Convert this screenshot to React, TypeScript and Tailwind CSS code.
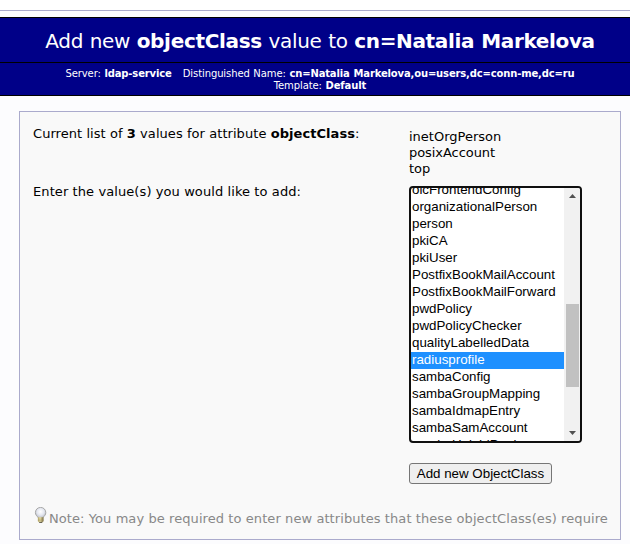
const options = [
  'olcFrontendConfig',
  'organizationalPerson',
  'person',
  'pkiCA',
  'pkiUser',
  'PostfixBookMailAccount',
  'PostfixBookMailForward',
  'pwdPolicy',
  'pwdPolicyChecker',
  'qualityLabelledData',
  'radiusprofile',
  'sambaConfig',
  'sambaGroupMapping',
  'sambaIdmapEntry',
  'sambaSamAccount',
  'sambaUnixIdPool',
];

function Bulb() {
  return (
    <svg width="16" height="16" viewBox="0 0 16 16" className="mt-px block shrink-0">
      <defs>
        <radialGradient id="glass" cx="0.5" cy="0.4" r="0.6">
          <stop offset="0" stopColor="#ffffff" />
          <stop offset="0.55" stopColor="#e4e7f0" />
          <stop offset="1" stopColor="#b9bcc2" />
        </radialGradient>
        <linearGradient id="cap" x1="0" x2="1">
          <stop offset="0" stopColor="#b5a66a" />
          <stop offset="0.4" stopColor="#efe7b0" />
          <stop offset="1" stopColor="#75683c" />
        </linearGradient>
      </defs>
      <path
        d="M7.600 0.400C4.500 0.400 2.400 2.800 2.400 5.600c0 2.200 1.300 3.200 2.200 4.200.4.500.6.900.6 1.300h4.800c0-.4.200-.8.600-1.300.9-1 2.200-2 2.200-4.200C12.800 2.800 10.700 0.400 7.600 0.400z"
        fill="url(#glass)"
        stroke="#a0a0a0"
        strokeWidth="0.9"
      />
      <path d="M4.900 10.300h5.600v3.900l-1.300 1.300H6.200l-1.300-1.300z" fill="url(#cap)" />
      <path d="M4.900 12.200h5.600M4.900 13.700h5.600" stroke="#8f824f" strokeWidth="0.4" />
      <path d="M6.200 15.400h3" stroke="#4a4638" strokeWidth="0.9" />
    </svg>
  );
}

export default function App() {
  return (
    <div className="h-[544px] w-[630px] overflow-hidden bg-[#fcfcfe] font-['DejaVu_Sans',sans-serif] text-[13px] leading-4 text-black">
      <div className="h-[11px] border-b border-[#aaaacc] bg-white" />
      <header className="mt-1.5 whitespace-nowrap border-y border-black bg-[#000088] text-center text-white">
        <h1 className="h-[45px] border-b border-black pl-[10px] pt-[11px] text-[20px] leading-6 tracking-[-0.32px] [word-spacing:0.6px]">
          Add new <b>objectClass</b> value to <b className="tracking-[-0.36px]">cn=Natalia Markelova</b>
        </h1>
        <div className="h-8 pl-[10px] pt-[5px] text-[10px] leading-3 tracking-[-0.1px] [word-spacing:0.6px]">
          <div>
            Server: <b className="tracking-[-0.14px]">ldap-service</b> &nbsp; Distinguished Name:{' '}
            <b className="tracking-[-0.15px]">cn=Natalia Markelova,ou=users,dc=conn-me,dc=ru</b>
          </div>
          <div>
            Template: <b>Default</b>
          </div>
        </div>
      </header>
      <main className="ml-[19px] mt-[15px] h-[429px] w-[602px] border border-[#aaaacc] bg-[#f9f9f9]">
        <div className="flex h-[74px] pl-[13px] pt-[14px]">
          <div className="w-[376px] shrink-0 tracking-[0.06px]">
            Current list of <b>3</b> values for attribute <b>objectClass</b>:
          </div>
          <div className="pt-[3px]">
            <div>inetOrgPerson</div>
            <div className="tracking-[-0.06px]">posixAccount</div>
            <div>top</div>
          </div>
        </div>
        <div className="flex h-[320px] pl-[13px]">
          <div className="-mt-0.5 w-[376px] shrink-0 tracking-[0.09px]">
            Enter the value(s) you would like to add:
          </div>
          <div className="font-['Liberation_Sans',Arial,sans-serif] text-[13.333px]">
            <div className="flex h-[257px] w-[173px] overflow-hidden rounded-[4px] border-2 border-[#101010] bg-white">
              <div className="h-full min-w-0 flex-1 overflow-hidden">
                <div className="-mt-1.5">
                  {options.map((name) => (
                    <div
                      key={name}
                      className={
                        name === 'radiusprofile'
                          ? 'h-[17px] whitespace-nowrap bg-[#1e90ff] pl-px leading-[15px] text-white'
                          : 'h-[17px] whitespace-nowrap pl-px leading-[15px]'
                      }
                    >
                      {name}
                    </div>
                  ))}
                </div>
              </div>
              <div className="flex w-4 flex-col items-center bg-[#f1f1f1] pl-px">
                <svg width="7" height="4" viewBox="0 0 7 4" className="mt-1.5">
                  <path d="M0 4h7L3.500 0z" fill="#505050" />
                </svg>
                <div className="mt-[106px] h-[83px] w-[13px] bg-[#c1c1c1]" />
                <svg width="7" height="4" viewBox="0 0 7 4" className="mt-[44px]">
                  <path d="M0 0h7L3.500 4z" fill="#505050" />
                </svg>
              </div>
            </div>
            <button className="mt-5 block h-[21px] w-[143px] whitespace-nowrap rounded-[3px] border border-[#767676] bg-[#efefef] text-center leading-[19px]">
              Add new ObjectClass
            </button>
          </div>
        </div>
        <div className="flex whitespace-nowrap pl-[13px] text-[#888888]">
          <Bulb />
          <span className="pt-[5px] tracking-[0.08px]">
            Note: You may be required to enter new attributes that these objectClass(es) require
          </span>
        </div>
      </main>
    </div>
  );
}
